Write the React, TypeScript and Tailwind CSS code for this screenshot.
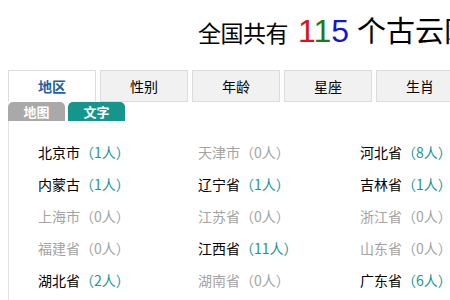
import { useState } from "react";

type Region = { name: string; count: number };

const regions: Region[] = [
  { name: "北京市", count: 1 },
  { name: "天津市", count: 0 },
  { name: "河北省", count: 8 },
  { name: "内蒙古", count: 1 },
  { name: "辽宁省", count: 1 },
  { name: "吉林省", count: 1 },
  { name: "上海市", count: 0 },
  { name: "江苏省", count: 0 },
  { name: "浙江省", count: 0 },
  { name: "福建省", count: 0 },
  { name: "江西省", count: 11 },
  { name: "山东省", count: 0 },
  { name: "湖北省", count: 2 },
  { name: "湖南省", count: 0 },
  { name: "广东省", count: 6 },
];

const tabs = ["地区", "性别", "年龄", "星座", "生肖"];

export default function App() {
  const [tab, setTab] = useState(0);
  const [mode, setMode] = useState<"map" | "text">("text");

  return (
    <div
      className="w-[450px] h-[300px] overflow-hidden bg-white text-black"
      style={{ fontFamily: '"Noto Sans CJK SC", "Liberation Sans", sans-serif' }}
    >
      {/* Title */}
      <div className="flex items-baseline pl-[198px] pt-[14px] h-[70px] whitespace-nowrap">
        <span className="text-[23px] leading-[30px] tracking-[-0.5px]">全国共有</span>
        <span className="ml-[10px] text-[32px] leading-[30px] font-['Liberation_Sans']">
          <span className="text-[#e0101a]">1</span>
          <span className="text-[#1b7a1b]">1</span>
          <span className="text-[#1515d0]">5</span>
        </span>
        <span className="ml-[8px] text-[29px] leading-[30px]">个古云网友</span>
      </div>

      {/* Tabs */}
      <div className="flex gap-[4px] pl-[8px]">
        {tabs.map((t, i) => (
          <button
            key={t}
            type="button"
            onClick={() => setTab(i)}
            className={
              "shrink-0 w-[88px] h-[32px] text-[14px] border " +
              (tab === i
                ? "bg-white border-[#dcdcdc] border-b-white text-[#1d5fa6] font-bold"
                : "bg-[#f1f1f1] border-[#dcdcdc] text-black")
            }
          >
            {t}
          </button>
        ))}
      </div>

      {/* Map / text switch */}
      <div className="flex gap-[3px] pl-[8px]">
        <button
          type="button"
          onClick={() => setMode("map")}
          className={
            "w-[57px] h-[19px] rounded-t-[5px] text-white text-[13px] font-bold leading-[19px] " +
            (mode === "map" ? "bg-[#15968c]" : "bg-[#a9a9a9]")
          }
        >
          地图
        </button>
        <button
          type="button"
          onClick={() => setMode("text")}
          className={
            "w-[57px] h-[19px] rounded-t-[5px] text-white text-[13px] font-bold leading-[19px] " +
            (mode === "text" ? "bg-[#15968c]" : "bg-[#a9a9a9]")
          }
        >
          文字
        </button>
      </div>

      {/* Region list */}
      <div className="ml-[8px] border-l border-[#e2e2e2] pl-[29px] pt-[15px] h-[200px]">
        <div className="grid grid-cols-[160px_162px_160px]">
          {regions.map(r => (
            <div key={r.name} className="h-[32px] leading-[32px] text-[14px] whitespace-nowrap">
              <span className={r.count > 0 ? "text-black" : "text-[#a3a3a3]"}>{r.name}</span>
              <span className={r.count > 0 ? "text-[#1a968c]" : "text-[#a3a3a3]"}>
                （{r.count}人）
              </span>
            </div>
          ))}
        </div>
      </div>
    </div>
  );
}
